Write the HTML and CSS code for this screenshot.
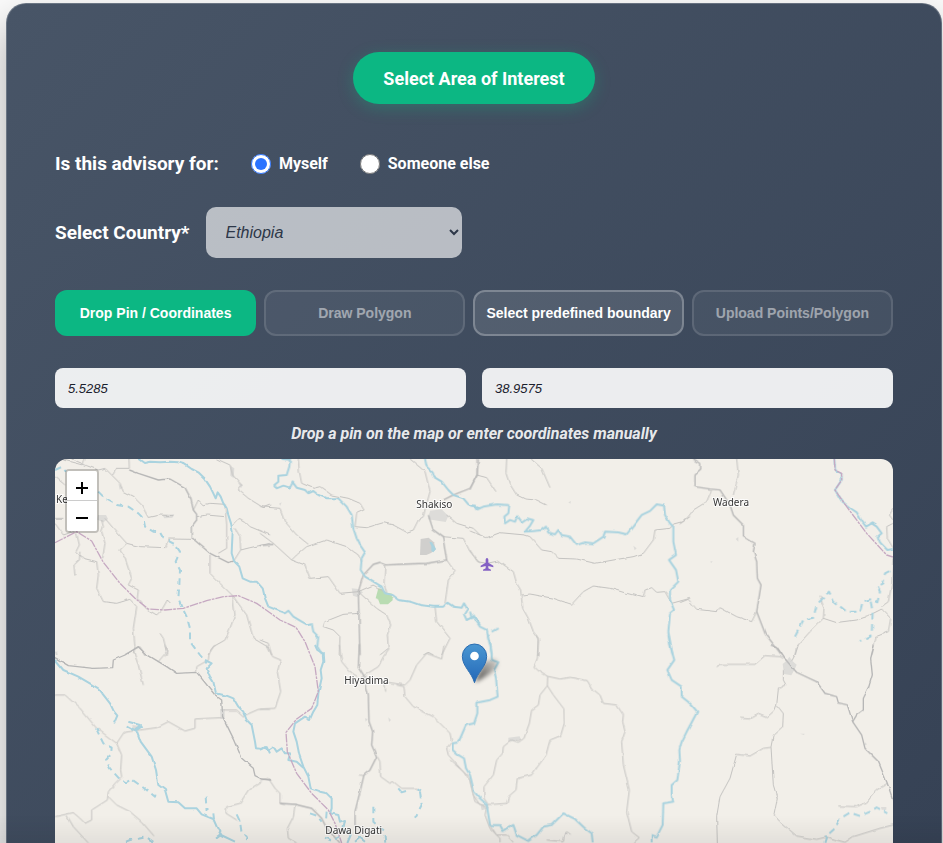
FILE: index.html
```html
<!DOCTYPE html>
<html lang="en">
<head>
<meta charset="utf-8">
<meta name="viewport" content="width=device-width, initial-scale=1">
<title>Select Area of Interest</title>
<link rel="stylesheet" href="styles.css">
</head>
<body>
<main class="card">
  <button class="title-btn" type="button">Select Area of Interest</button>

  <fieldset class="row audience" aria-labelledby="audience-label">
    <span class="label" id="audience-label">Is this advisory for:</span>
    <label class="choice"><input type="radio" name="audience" checked>Myself</label>
    <label class="choice"><input type="radio" name="audience">Someone else</label>
  </fieldset>

  <div class="row country">
    <label class="label" for="country">Select Country*</label>
    <select id="country" class="select"><option>Ethiopia</option></select>
  </div>

  <div class="modes">
    <button class="mode active" type="button">Drop Pin / Coordinates</button>
    <button class="mode" type="button" disabled>Draw Polygon</button>
    <button class="mode" type="button">Select predefined boundary</button>
    <button class="mode" type="button" disabled>Upload Points/Polygon</button>
  </div>

  <div class="coords">
    <input class="coord" type="text" aria-label="Latitude" value="5.5285">
    <input class="coord" type="text" aria-label="Longitude" value="38.9575">
  </div>

  <p class="hint">Drop a pin on the map or enter coordinates manually</p>

  <div class="map">
    <svg class="map-art" viewBox="0 0 2514 1152" preserveAspectRatio="xMidYMin slice" role="img" aria-label="Map">
      <defs>
        <filter id="rough" filterUnits="userSpaceOnUse" x="0" y="0" width="2514" height="1152" color-interpolation-filters="sRGB">
          <feTurbulence type="fractalNoise" baseFrequency="0.04" numOctaves="1" seed="4"/>
          <feDisplacementMap in="SourceGraphic" scale="9" xChannelSelector="R" yChannelSelector="G"/>
        </filter>
        <filter id="soft" x="-50%" y="-50%" width="200%" height="200%"><feGaussianBlur stdDeviation="7"/></filter>
        <linearGradient id="pin" x1="0" y1="0" x2="0" y2="1"><stop offset="0" stop-color="#4a97d2"/><stop offset="1" stop-color="#2468b8"/></linearGradient>
        <linearGradient id="cast" x1="0" y1="1" x2="1" y2="0"><stop offset="0" stop-color="#000" stop-opacity=".7"/><stop offset="1" stop-color="#000" stop-opacity=".1"/></linearGradient>
      </defs>

      <g class="town">
        <path d="M1125 155l35-4 20 20 -8 18 -52-8z"/>
        <path d="M1097 240l24-4 16 14 5 22 -14 10 -14 6 -19 0z" class="town-dark"/>
        <path d="M2183 615l12-10 8-12 10 14 12 10 -6 14 -10 18 -22-4z"/>
        <path d="M129 168l24 0 6 12 -14 10 -18-8z"/>
        <path d="M890 388l20 2 14 10 -18 14 -12-4z"/>
        <path d="M190 72l12 14 -8 6z M526 20l12 8 -2 30 -10 -8z M548 70l16 8 -6 10z M495 750l14 0 0 30 -12 0z M1360 836l34-4 4 10 -38 6z M232 798l26 4 -6 12 -18 0z M1276 1034l20 2 6 12 -22 6z"/>
        <path d="M322 168l36-2 -6 10 -24 2z M1735 260l10 8 -6 6z M2042 240l8-6 0 14z M1540 130l8-4 -2 8z M1965 308l8-2 -4 6z M672 134l8-4 -4 10z M1000 775l8 8 -6 6z M930 778l8 2 -6 8z M2235 824l14 0 -2 4z M2430 850l6 6 -8 4z M2478 1044l16 0 0 8 -14 0z"/>
      </g>
      <path class="park" d="M975 392l42 24 -4 0 0 8 -14 12 -4 0 -20 0 -6-16 -2 4z M970 388l12 2 8 10 22 4 -2 10 -12 8 -4 12 -16 2 -2-14 -14-4z"/>
      <path class="lake" d="M1123 248l8 2 12 20 -8 10 -6-4 0-14z"/>

      <g filter="url(#rough)">
        <g class="minor">
          <g transform="translate(-15 -12)">
            <path d="M65 12L95 25 110 32 145 45 165 40 185 60 210 85 220 110 250 125 275 150 295 188 330 180 370 182"/>
            <path d="M237 12L238 40 200 40 188 60M500 12L540 30 548 60 575 90 565 105 595 130 640 158 660 150"/>
            <path d="M105 12L98 30 40 15M15 65L45 90M15 190L40 190M15 205L40 240 75 228M80 235L88 270 78 290 100 310 140 320 145 360 140 400 160 440 200 445 240 433 260 455 250 520 255 575 250 600"/>
            <path d="M90 290L88 315 72 330 75 365M155 195L160 215 155 230 165 265 158 310M165 190L190 220 230 265 270 275 345 278 355 252 425 253"/>
            <path d="M230 265L210 285 225 310 245 370 235 390 265 405 262 430 290 462 320 480 335 465 352 435 365 448"/>
            <path d="M430 165L445 135 460 150 480 145 525 148 530 210 530 260 530 280 505 295M440 185L470 180 525 185M545 215L568 190 585 200 600 215 660 240M555 220L570 245 572 285 600 278 660 265M572 285L550 320"/>
            <path d="M480 300L480 355 510 385 548 422 590 480 610 550 660 580M548 422L555 480 540 520 525 555 490 575 475 600M330 535L340 550 350 590 348 600M225 598L270 575 285 600M18 590L20 600"/>
          </g>
          <g transform="translate(615 -12)">
            <path d="M115 12L118 50 125 85 160 100 180 95 215 120 265 130 300 145 312 165 290 175 285 215 320 218 370 203 400 210 440 232 460 225 475 195 490 185 495 165 510 110 495 50 450 12"/>
            <path d="M0 155L60 160 75 200 110 240 145 268M0 235L40 265 95 315 135 330 150 370 205 365 240 415 295 410M95 315L110 300 140 275 200 255 260 275 295 300 305 320"/>
            <path d="M375 330L372 385 380 412M300 475L250 478 195 500 190 515 220 525 240 545 238 600M300 415L350 460 380 480 392 510 382 540 385 580 360 600M295 410L340 390 380 415"/>
            <path d="M560 315L585 350 565 375 555 445M525 455L530 500 570 550 545 600M560 180L590 205 640 220 660 240M548 245L610 250 630 290 660 325M0 555L25 565 35 600M490 600L505 592 520 600"/>
          </g>
          <g transform="translate(1245 -12)">
            <path d="M20 12L20 60 0 105M20 60L50 68 78 110M110 12L108 55 118 85 140 120 165 132 200 135 230 150M183 12L215 40 240 98"/>
            <path d="M0 228L50 248 90 233 165 240 180 245 215 285 245 290 265 310 320 312 375 325 430 315 490 305 520 295 550 255 555 225 600 220 610 208 640 200 660 185"/>
            <path d="M0 285L22 320 50 325 85 318 130 350 140 385 152 405 158 460 175 490 190 530 205 550 203 600M155 420L180 417 250 430 305 448 340 410 370 393 420 400 470 415 520 428 525 405 545 398 560 412 585 410 605 445 660 430"/>
          </g>
          <g transform="translate(1875 -12)">
            <path d="M170 12L175 60 165 100 160 120M95 105L80 140 40 165 25 185 0 208M0 443L25 433 50 463 110 470 120 458 170 485 215 500 230 470"/>
            <path d="M639 162L628 180 639 195M639 205L620 215 622 250 639 278M420 425L432 460 430 490 470 503 530 495 560 485 605 462M430 490L390 530 350 575 345 600M639 310L635 390 625 440 605 455M605 462L632 490 625 530 588 545 575 600"/>
          </g>
          <g transform="translate(-15 558)">
            <path d="M345 0L350 20 325 50M250 18L265 60 280 120M440 80L440 65 475 45 478 20 495 0M15 150L45 150 90 190 140 250 200 295 222 262 270 255 320 248 355 230 405 258 435 250 435 222 515 218"/>
            <path d="M520 195L560 195 580 213 625 193 660 193M200 295L215 330 212 375 215 395 195 415 175 440 172 465 125 495 125 525 105 535 90 520 70 503 15 515M175 455L200 480 240 500 275 530 312 573M50 510L70 545 115 594"/>
            <path d="M635 410L595 435 570 475 530 485 528 505 560 525"/>
          </g>
          <g transform="translate(615 558)">
            <path d="M20 0L38 35 62 45 52 80 62 140 45 190 0 192M238 0L245 50 270 80 300 100 315 90 355 65 370 35 388 10"/>
            <path d="M370 110L435 120 450 105 470 60 500 25 545 42 552 0M410 120L432 125 435 155 460 185 520 215 570 265 575 290 560 310 565 330 605 375 630 400 640 450 660 480M375 120L377 140"/>
            <path d="M352 335L360 350 362 395 390 415 400 410 425 430 470 430 480 440M300 390L312 392M105 480L100 515 82 550 85 580 110 594M0 405L25 400 45 430 60 445 60 475 75 480"/>
          </g>
          <g transform="translate(1185 528)">
            <path d="M258 0L265 15 262 70 252 95 265 107 293 124 330 132 360 127 412 137 425 160 450 180 460 205 500 210 520 240 518 260 525 290 515 320 520 390 538 465 530 530 545 590 568 608 552 622"/>
            <path d="M293 124L292 152 270 180 265 210 245 225 238 265 222 310 205 322 185 315 160 335 158 355 140 375 130 420 102 455 102 490 112 505M292 152L310 180 342 222 343 265 332 302 300 315 288 360 245 420 202 430 198 465 175 485 170 505 130 508 112 508 105 540 120 580 150 610 150 622"/>
            <path d="M0 375L40 410 60 440 75 500 105 515M120 570L140 600 170 600 190 622M290 615L340 620 345 600 350 590 362 598"/>
          </g>
          <g transform="translate(1875 558)">
            <path d="M107 65L120 58 225 58 255 32 300 35 320 45M355 0L345 30 335 48M310 75L310 105 318 120 295 132 290 180 310 205 308 245 280 270 273 305 280 420 292 460 282 510 300 530 350 573 410 583 440 576 470 585 495 592 520 575 600 550 639 540"/>
            <path d="M180 220L210 222 235 208 260 218 285 195 290 180M273 307L250 310 210 333 170 328 150 400 120 455 110 515 112 594M475 483L530 485 560 472 590 435 622 415"/>
          </g>
        </g>
        <g class="major">
          <g transform="translate(-15 -12)"><path d="M238 45L265 55 325 75 360 72 405 98 422 130 430 165 440 178 440 195 427 212 427 250 480 295 535 323 552 318"/></g>
          <g transform="translate(615 -12)"><path d="M655 12L652 60 630 100 580 120 550 135M505 180L520 225 548 245 560 315 500 325 415 328 380 330 360 322 340 328 310 360 295 410 300 600M0 272L40 268"/></g>
          <g transform="translate(1875 -12)"><path d="M40 12L62 25 62 45 45 60 45 95 90 102 120 105 150 150 160 180 190 210 190 245 225 265 220 290 230 320 232 370 243 390 230 470 255 535 305 600"/></g>
          <g transform="translate(-15 558)"><path d="M15 38L55 62 130 70 188 68 190 45 225 30 265 5 285 25 350 65 380 85 440 82 495 150 515 165 518 215 550 280 575 340 610 370 615 392 635 402 660 405"/></g>
          <g transform="translate(615 558)"><path d="M298 0L295 65 312 92 325 150 327 230 338 260 335 300 350 335 330 375 312 390 300 440 285 500 285 545M60 475L105 478 155 490 185 520 200 550 240 594"/></g>
          <g transform="translate(1875 558)"><path d="M275 0L290 5 315 42 350 82 410 110 435 145 470 155 475 173 502 180 518 230 545 270 555 310 595 350 622 415 639 465M583 0L572 40 577 90 565 130 550 160 550 195 530 210 518 230"/></g>
        </g>
        <g class="river">
          <g transform="translate(-15 -12)"><path d="M265 12L282 24 300 20 330 22 360 20 385 22 405 28 425 42 445 52 462 68 480 95 490 115 497 130 503 112 512 125 520 145 530 160 535 180 543 205 548 230 546 270 545 295 552 318 568 335 578 370 600 380 620 380 638 400 645 430 655 455"/></g>
          <g transform="translate(615 -12)">
            <path d="M25 455L50 465 75 475 85 467 100 485 125 500 140 508 155 505 160 530 175 545 172 575 188 600"/>
            <path d="M65 12L90 14 88 35 80 60 55 62 55 80 43 90 50 100 70 92 90 98 98 82 110 98 135 105 145 115 160 108 175 120 200 130 235 130 260 155 275 180 280 220 290 250 300 270 315 292 305 310 302 345 315 365 340 380 365 395 375 415 395 420 415 435 450 440 480 450 520 455 550 455 562 443 580 455 605 458 612 445 622 462 612 478 620 495 640 485 660 510"/>
            <path d="M495 12L500 35 515 50 520 65 545 80 565 105 580 120 610 130 625 148 645 155 660 160"/>
          </g>
          <g transform="translate(1245 -12)">
            <path d="M0 152L15 152 22 163 40 155 80 148 118 150 115 175 103 185 105 205 120 195 135 200 142 183 155 200 170 190 190 195 180 212 165 230 190 228 215 225 228 215 235 233 255 238 265 225 275 240 300 245 320 270 345 262 370 265 400 245 405 230 445 232 470 238 490 212 515 180 540 168 560 148 582 152 585 180 600 205 610 215 610 260 618 300 597 315 618 345 625 380 600 405 600 435 612 465 600 475 595 530 608 600"/>
            <path d="M0 470L5 490 12 482 20 500 30 515 50 525 55 550 60 570 66 600M65 530L83 520"/>
          </g>
          <g transform="translate(1875 -12)"><path d="M463 12L465 45 485 55 485 75 465 105 485 138 515 162 530 172 545 198 558 215 575 205 590 215 605 235 593 245 600 262 622 285 639 282"/></g>
          <g transform="translate(-15 558)">
            <path d="M15 45L40 75 85 95 145 130 180 175 192 200 202 212 192 235M235 230L270 240 255 258 275 245M230 245L262 262 272 290 305 335 318 375 325 420 345 435 355 470 385 472 405 490 440 490 455 508 490 522 500 545 513 570 555 590M490 505L492 522M515 565L498 578"/>
            <path d="M465 45L485 55 470 70 480 95 490 110 498 145 530 152 550 160 565 185 580 200 590 225 605 240 610 265 615 290 618 310 635 312 650 303 660 325"/>
          </g>
          <g transform="translate(615 558)">
            <path d="M165 0L172 15 188 25 190 50 182 75 185 100 175 145 172 180 160 200 150 222 135 215 105 235 100 260 110 290 118 330 130 365 145 395 152 430 180 440 200 445 215 460 215 490 210 505 235 510 240 530 255 525 250 550 272 570 262 594"/>
            <path d="M0 315L15 303 25 315 40 305 50 320 65 310 75 325 90 325 85 345 110 350 130 368M415 430L425 442 438 438M470 430L482 438M285 590L300 578 315 590"/>
          </g>
          <g transform="translate(1185 528)">
            <path d="M117 0L122 30 126 75 145 82 132 105 138 130 143 185 120 195 82 203 82 235 72 265 48 270 35 300 25 322 8 325 8 345 25 360 42 370 48 400 60 420 72 470 90 490 110 508 115 540 120 570 150 570 160 588 190 570 200 600 235 618 260 600 280 575 305 570 340 535 375 552 405 580 425 595 428 622"/>
            <path d="M655 0L660 30 673 75 652 105 665 135 695 155 695 185 720 205 742 230 725 262 710 290 695 320 688 345 690 378 682 435 665 450 665 480 670 500 640 505 638 570 620 605 605 600 605 622"/>
          </g>
        </g>
        <g class="river dashed">
          <g transform="translate(-15 -12)"><path d="M15 45L35 36 48 50M145 110L165 130 200 150 235 155 265 175 280 190 285 215 310 230 330 232 340 250 375 268 390 290 377 320 390 345 388 390 385 430 395 455 410 485 420 520 420 560 435 580 450 600 470 625"/></g>
          <g transform="translate(1875 -12)"><path d="M345 545L370 495 400 488 410 450 447 410 462 440 500 470 540 470 548 440 570 433 592 442 600 410 592 395 610 385 615 355 639 342M572 440L578 470 575 540 540 558"/></g>
          <g transform="translate(-15 558)"><path d="M138 250L160 295 185 308 183 328 168 345 180 370 205 398 228 412 245 403 290 435 315 455 320 435M467 455L470 500M560 508L570 530 575 565 590 575 585 594M228 590L240 585 290 577 315 594"/></g>
          <g transform="translate(615 558)"><path d="M340 485L340 530 372 560 376 594M480 440L485 480 465 518M150 505L170 512 185 530M200 500L198 525M195 578L215 588 240 575"/></g>
          <g transform="translate(1875 558)"><path d="M433 594L440 572 465 550 480 520 510 503 540 513 570 500 590 487 622 505"/></g>
        </g>
      </g>

      <g class="boundary">
        <path d="M0 251L65 218 110 246 145 310 195 373 240 418 280 450 330 453 385 448 455 425 505 413 550 410 605 433 675 483 723 505 750 548 780 623 790 698 770 748 725 780 693 820 697 878 725 943 770 1003 820 1053 840 1093 860 1152"/>
        <path d="M2338 0L2340 33 2360 43 2360 63 2340 93 2375 143 2435 223 2495 288 2514 294"/>
      </g>

      <path class="plane" d="M1296 297c3 0 4 3 4 6v8l15 9v5l-15-4v7l8 4v3h-24v-3l8-4v-7l-15 4v-5l15-9v-8c0-3 1-6 4-6z"/>

      <g class="place">
        <text x="3" y="132">Ke</text>
        <text x="1084" y="146">Shakiso</text>
        <text x="1974" y="142">Wadera</text>
        <text x="868" y="674">Hiyadima</text>
        <text x="811" y="1124">Dawa Digati</text>
      </g>

      <path d="M1260 670L1284 612Q1330 586 1328 616Q1322 640 1260 670z" fill="url(#cast)" filter="url(#soft)"/>
      <path class="pin" d="M1258.500 671C1250 640 1222 622 1222 592a36.500 37 0 0 1 73 0C1295 622 1267 640 1258.500 671z"/>
      <circle cx="1258.500" cy="591" r="13" fill="#fff"/>
    </svg>
    <div class="zoom">
      <button type="button" aria-label="Zoom in"><svg viewBox="0 0 14 14"><path d="M1 7h12M7 1v12"/></svg></button>
      <button type="button" aria-label="Zoom out"><svg viewBox="0 0 14 14"><path d="M1 7h12"/></svg></button>
    </div>
  </div>
</main>
</body>
</html>
```
FILE: styles.css
```css
* { box-sizing: border-box; }

body {
  margin: 0;
  height: 100vh;
  padding: 3px 1px 0 6px;
  display: flex;
  overflow: hidden;
  background: #fafafa;
  font-family: Roboto, "Liberation Sans", sans-serif;
  color: #fff;
}

body::after {
  content: "";
  position: fixed;
  inset: auto 0 0;
  height: 28px;
  background: linear-gradient(transparent, rgba(0, 0, 0, .06));
  pointer-events: none;
}

.card {
  flex: 1;
  min-width: 0;
  display: flex;
  flex-direction: column;
  padding: 48px 48px 0;
  border: 1px solid rgba(255, 255, 255, .2);
  border-bottom: 0;
  border-radius: 20px 20px 0 0;
  background: linear-gradient(135deg, #485567, #364255) border-box;
  box-shadow: 0 20px 40px rgba(0, 0, 0, .3);
}

.title-btn {
  align-self: center;
  height: 52px;
  padding: 0 30px;
  border: 0;
  border-radius: 26px;
  background: #0cb783;
  box-shadow: 0 4px 16px rgba(16, 185, 129, .3);
  color: #fff;
  font: 700 18px Roboto, sans-serif;
}

.row { display: flex; align-items: center; }

.audience {
  height: 24px;
  margin: 48px 0 0;
  padding: 0;
  border: 0;
  gap: 32px;
}

.label { font-size: 19px; font-weight: 700; }

.choice {
  display: flex;
  align-items: center;
  gap: 8px;
  font-size: 16px;
  font-weight: 700;
}

.choice input { width: 20px; height: 20px; margin: 0; accent-color: #2b73ff; }

.country { margin-top: 31px; gap: 16px; }

.select {
  width: 256px;
  height: 51px;
  padding: 0 16px;
  border: 0;
  border-radius: 10px;
  background-color: rgba(255, 255, 255, .63);
  color: #2d3748;
  font: italic 16px "Liberation Sans", sans-serif;
}

.modes { display: flex; gap: 8px; margin-top: 32px; }

.mode {
  flex: 1 1 0;
  height: 46px;
  padding: 0 11px;
  border: 2px solid rgba(255, 255, 255, .25);
  border-radius: 12px;
  background: rgba(255, 255, 255, .1);
  color: #fff;
  font: 700 14px "Liberation Sans", sans-serif;
  white-space: nowrap;
}

.mode.active { border-color: #0cb783; background: #0cb783; }
.mode:disabled { opacity: .5; }

.coords { display: flex; gap: 16px; margin-top: 32px; }

.coord {
  flex: 1;
  min-width: 0;
  height: 40px;
  padding: 0 13px;
  border: 0;
  border-radius: 8px;
  background: rgba(255, 255, 255, .9);
  color: #1a202c;
  font: italic 13px "Liberation Sans", sans-serif;
}

.hint {
  margin: 16px 0;
  text-align: center;
  color: rgba(255, 255, 255, .9);
  font-size: 16px;
  font-style: italic;
  font-weight: 700;
  line-height: 19px;
}

.map {
  position: relative;
  flex: 1;
  min-height: 0;
  overflow: hidden;
  border-radius: 12px 12px 0 0;
  background: #f2efe9;
}

.map-art { display: block; width: 100%; height: 100%; }
.map-art path { stroke-linejoin: round; }
.minor path, .major path, .river path, .boundary path { fill: none; }
.minor { stroke: #c4c3c1; stroke-width: 3; }
.major { stroke: #b6b6b6; stroke-width: 4; }
.river { stroke: #aad3df; stroke-width: 6; }
.river.dashed { stroke-dasharray: 20 14; }
.boundary { stroke: #c6a9c2; stroke-width: 4; stroke-dasharray: 26 3 8 3; }
.town { fill: #dddcd9; }
.town-dark { fill: #d0cfcd; }
.park { fill: #b9dcb2; }
.lake { fill: #aad3df; }
.plane { fill: #8461c4; }
.pin { fill: url(#pin); stroke: #2a6cb0; stroke-width: 3; }

.place {
  fill: #333;
  stroke: rgba(255, 255, 255, .8);
  stroke-width: 6px;
  paint-order: stroke;
  font: 30px "Noto Sans", sans-serif;
}

.zoom {
  position: absolute;
  top: 10px;
  left: 10px;
  width: 34px;
  border: 2px solid rgba(0, 0, 0, .2);
  border-radius: 4px;
  overflow: hidden;
}

.zoom button {
  display: grid;
  place-items: center;
  width: 30px;
  height: 30px;
  padding: 4px 0 0;
  border: 0;
  background: #fff;
}

.zoom button:first-child { border-bottom: 1px solid #ccc; }
.zoom svg { width: 14px; height: 14px; stroke: #000; stroke-width: 2; }
```
